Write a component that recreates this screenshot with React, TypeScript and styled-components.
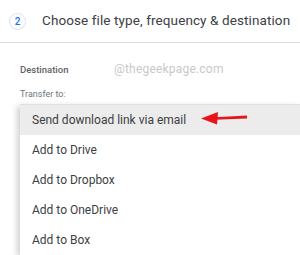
import React from 'react';
import styled, { createGlobalStyle } from 'styled-components';

const GlobalStyle = createGlobalStyle`
  html, body {
    margin: 0;
    padding: 0;
    background: #fff;
    overflow: hidden;
  }
  body {
    font-family: Roboto, "Open Sans", Arial, sans-serif;
  }
`;

const Page = styled.div`
  width: 300px;
  height: 255px;
  display: flex;
  flex-direction: column;
  overflow: hidden;
`;

const Header = styled.div`
  height: 42px;
  display: flex;
  align-items: center;
  padding-left: 9px;
  border-bottom: 1px solid #dadce0;
  flex-shrink: 0;
`;

const StepBadge = styled.div`
  width: 17px;
  height: 17px;
  border-radius: 50%;
  border: 1px solid #d2e3fc;
  color: #1a73e8;
  font-size: 10px;
  font-weight: 500;
  display: flex;
  align-items: center;
  justify-content: center;
  box-sizing: border-box;
  margin-right: 16px;
`;

const Title = styled.div`
  font-size: 13.5px;
  color: #3c4043;
  letter-spacing: 0.1px;
  margin-top: -2px;
`;

const DestRow = styled.div`
  display: flex;
  align-items: center;
  height: 20px;
  margin-top: 16px;
  padding-left: 20px;
`;

const FieldLabel = styled.div`
  font-size: 9.5px;
  font-weight: 500;
  color: #5f6368;
  width: 94px;
`;

const Watermark = styled.div`
  font-size: 12px;
  color: #c8c8c8;
  letter-spacing: 0.2px;
`;

const TransferLabel = styled.div`
  font-size: 9px;
  color: #70757a;
  padding-left: 20px;
  margin-top: 8px;
  height: 14px;
  line-height: 14px;
`;

const Menu = styled.div`
  margin-left: 20px;
  margin-top: 3px;
  border-top: 1px solid #e0e0e0;
  box-shadow: -3px 2px 6px rgba(0, 0, 0, 0.18);
  background: #fff;
  display: flex;
  flex-direction: column;
`;

const Item = styled.div<{ active?: boolean }>`
  position: relative;
  height: 30px;
  display: flex;
  align-items: center;
  padding-left: 12px;
  font-size: 12px;
  color: #3c4043;
  background: ${p => (p.active ? '#ececec' : '#fff')};
`;

const Arrow = styled.svg`
  position: absolute;
  left: 181px;
  top: 5px;
`;

const items = [
  'Send download link via email',
  'Add to Drive',
  'Add to Dropbox',
  'Add to OneDrive',
  'Add to Box',
];

const App: React.FC = () => {
  return (
    <>
      <GlobalStyle />
      <Page>
        <Header>
          <StepBadge>2</StepBadge>
          <Title>Choose file type, frequency &amp; destination</Title>
        </Header>
        <DestRow>
          <FieldLabel>Destination</FieldLabel>
          <Watermark>@thegeekpage.com</Watermark>
        </DestRow>
        <TransferLabel>Transfer to:</TransferLabel>
        <Menu>
          {items.map((t, i) => (
            <Item key={t} active={i === 0}>
              {t}
              {i === 0 && (
                <Arrow width="48" height="16" viewBox="0 0 48 16">
                  <path d="M14 7.2 L46 5.6 L46 8.6 L14 9.8 Z" fill="#e8141c" />
                  <path d="M0 8.6 L17 2 L16 14.5 Z" fill="#e8141c" />
                </Arrow>
              )}
            </Item>
          ))}
        </Menu>
      </Page>
    </>
  );
};

export default App;
